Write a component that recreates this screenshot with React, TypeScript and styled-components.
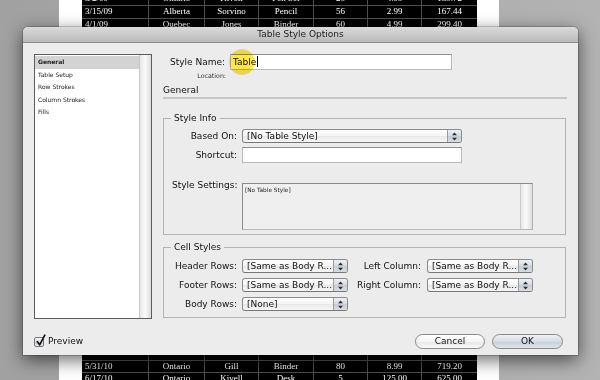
import React from 'react'
import styled, { createGlobalStyle } from 'styled-components'

const UI_FONT = `'DejaVu Sans', Verdana, sans-serif`

const GlobalStyle = createGlobalStyle`
    html, body {
        margin: 0;
        padding: 0;
    }
    body {
        width: 600px;
        height: 380px;
        overflow: hidden;
        background: #a9a9a9;
    }
`

/* ---------- document behind the dialog ---------- */

const Screen = styled.div`
    position: relative;
    width: 600px;
    height: 380px;
    overflow: hidden;
    background: linear-gradient(to right, #a1a1a1, #b3b3b3);
`

const Paper = styled.div`
    margin-left: 59px;
    width: 440px;
    height: 380px;
    box-sizing: border-box;
    padding: 0 22px 0 23px;
    background: #fff;
    overflow: hidden;
`

const Sheet = styled.div`
    margin-top: -7.68px;
    background: #000;
    color: #fff;
    font-family: 'Liberation Serif', 'Times New Roman', serif;
    font-size: 9px;
`

const SheetRow = styled.div`
    display: grid;
    grid-template-columns: 67px 56px 54px 55px 54px 54px 55px;
    height: 12.68px;
    box-sizing: border-box;
    border-top: 1px solid #4f4f4f;
`

const SheetCell = styled.div<{ $first?: boolean }>`
    border-right: 1px solid #4f4f4f;
    padding-left: ${p => (p.$first ? '3px' : '0')};
    text-align: ${p => (p.$first ? 'left' : 'center')};
    line-height: 11.68px;
    white-space: nowrap;
    overflow: hidden;
    &:last-child {
        border-right: none;
    }
`

const topRows: string[][] = [
    ['3/2/09', 'Ontario', 'Kivell', 'Pen Set', '28', '4.99', '139.72'],
    ['3/15/09', 'Alberta', 'Sorvino', 'Pencil', '56', '2.99', '167.44'],
    ['4/1/09', 'Quebec', 'Jones', 'Binder', '60', '4.99', '299.40'],
]

const bottomRows: string[][] = [
    ['5/31/10', 'Ontario', 'Gill', 'Binder', '80', '8.99', '719.20'],
    ['6/17/10', 'Ontario', 'Kivell', 'Desk', '5', '125.00', '625.00'],
]

// rows that sit entirely under the dialog
const COVERED_ROWS = 26
const EMPTY_ROW = ['', '', '', '', '', '', '']

const sheetRows = [
    ...topRows,
    ...Array.from({ length: COVERED_ROWS }, () => EMPTY_ROW),
    ...bottomRows,
]

/* ---------- dialog ---------- */

const Dialog = styled.div`
    position: absolute;
    left: 23px;
    top: 27px;
    width: 555px;
    height: 328px;
    display: flex;
    flex-direction: column;
    background: #ececec;
    border-radius: 5px 5px 0 0;
    box-shadow: 0 5px 18px rgba(0, 0, 0, 0.6), 0 0 0 1px rgba(0, 0, 0, 0.18);
    font-family: ${UI_FONT};
    color: #111;
`

const TitleBar = styled.div`
    flex: none;
    height: 16px;
    box-sizing: border-box;
    border-bottom: 1px solid #8e8e8e;
    border-radius: 5px 5px 0 0;
    background: linear-gradient(#dadada, #bababa);
    font-size: 9px;
    line-height: 15px;
    text-align: center;
    color: #1c1c1c;
`

const Body = styled.div`
    flex: 1;
    display: flex;
    flex-direction: column;
    padding: 11px 11px 6px;
`

const Main = styled.div`
    display: flex;
    gap: 11px;
    height: 265px;
`

const Sidebar = styled.div`
    display: flex;
    width: 118px;
    box-sizing: border-box;
    border: 1px solid #5c5c5c;
    background: #fff;
`

const NavList = styled.ul`
    flex: 1;
    margin: 0;
    padding: 1px 0 0;
    list-style: none;
`

const NavItem = styled.li<{ $active?: boolean }>`
    height: 12.5px;
    padding-left: 3px;
    font-size: 6px;
    line-height: 12.5px;
    font-weight: ${p => (p.$active ? 700 : 400)};
    background: ${p => (p.$active ? '#d3d3d3' : 'transparent')};
    color: #1a1a1a;
`

const ScrollTrack = styled.div`
    flex: none;
    width: 12px;
    box-sizing: border-box;
    border-left: 1px solid #cacaca;
    background: linear-gradient(to right, #e6e6e6, #fbfbfb 45%, #dcdcdc);
`

const Content = styled.div`
    display: flex;
    flex-direction: column;
    width: 404px;
`

const NameRow = styled.div`
    display: flex;
    align-items: center;
    height: 16px;
`

const FieldLabel = styled.label<{ $width?: number; $pad?: number }>`
    width: ${p => (p.$width ? `${p.$width}px` : 'auto')};
    box-sizing: border-box;
    padding-right: ${p => p.$pad ?? 5}px;
    text-align: right;
    font-size: 9px;
    line-height: 11px;
    white-space: nowrap;
`

const TextField = styled.div<{ $width: number; $height: number }>`
    width: ${p => p.$width}px;
    height: ${p => p.$height}px;
    box-sizing: border-box;
    padding-left: 2px;
    border: 1px solid #b9b9b9;
    border-top-color: #8f8f8f;
    background: #fff;
    font-size: 9px;
    line-height: 14px;
    white-space: nowrap;
`

const Caret = styled.span`
    display: inline-block;
    width: 1px;
    height: 11px;
    margin-left: 0.5px;
    vertical-align: -2px;
    background: #000;
`

const LocationNote = styled.div`
    width: 63px;
    margin-top: 2px;
    text-align: right;
    font-size: 6.3px;
    line-height: 8px;
    color: #333;
`

const SectionHeading = styled.h2`
    margin: 5px 0 0;
    padding-bottom: 1px;
    border-bottom: 2px solid #c6c6c6;
    font-size: 9px;
    font-weight: 400;
    line-height: 11px;
`

const Group = styled.fieldset<{ $top: number; $padTop: number; $padBottom: number }>`
    width: 403px;
    box-sizing: border-box;
    min-inline-size: 0;
    margin: ${p => p.$top}px 0 0;
    padding: ${p => p.$padTop}px 0 ${p => p.$padBottom}px;
    border: 1px solid #b3b3b3;
`

const GroupTitle = styled.legend`
    margin-left: 7px;
    padding: 0 3px;
    font-size: 9px;
    line-height: 11px;
`

const InfoGrid = styled.div`
    display: grid;
    grid-template-columns: 78px auto;
    row-gap: 4px;
    align-items: center;
`

const SettingsRow = styled.div`
    display: flex;
    align-items: flex-start;
    margin-top: 20px;
`

const SettingsLabel = styled.label`
    width: 78px;
    box-sizing: border-box;
    padding-left: 8px;
    margin-top: -3px;
    font-size: 9px;
    line-height: 11px;
    white-space: nowrap;
`

const SettingsBox = styled.div`
    display: flex;
    width: 291px;
    height: 47px;
    box-sizing: border-box;
    border: 1px solid #8a8a8a;
    border-right-color: #b0b0b0;
    border-bottom-color: #b8b8b8;
    background: #efefef;
`

const SettingsText = styled.div`
    flex: 1;
    padding: 3px 0 0 2px;
    font-size: 5.8px;
    line-height: 7px;
    color: #222;
`

const CellGrid = styled.div`
    display: grid;
    grid-template-columns: 78px 106px 79px 106px;
    grid-auto-rows: 14px;
    row-gap: 5px;
    align-items: center;
`

const PopupBox = styled.div<{ $width: number }>`
    display: flex;
    width: ${p => p.$width}px;
    height: 14px;
    box-sizing: border-box;
    border: 1px solid #8b8b8b;
    border-bottom-color: #777;
    border-radius: 3px;
    overflow: hidden;
    background: linear-gradient(#ffffff, #f4f4f4 50%, #e8e8e8 51%, #f7f7f7);
`

const PopupValue = styled.span`
    flex: 1;
    padding-left: 4px;
    font-size: 9px;
    line-height: 12px;
    white-space: nowrap;
    overflow: hidden;
`

const PopupArrows = styled.span`
    display: flex;
    align-items: center;
    justify-content: center;
    flex: none;
    width: 13px;
    border-left: 1px solid #9c9c9c;
    background: linear-gradient(#eef1f5, #d5dae1 50%, #c6ccd5 51%, #d9dee5);
`

const Footer = styled.div`
    display: flex;
    align-items: center;
    height: 15px;
    margin-top: 15px;
`

const PreviewToggle = styled.label`
    display: flex;
    align-items: center;
    gap: 4px;
    font-size: 9px;
    line-height: 11px;
`

const CheckBox = styled.span`
    position: relative;
    width: 10px;
    height: 10px;
    box-sizing: border-box;
    border: 1px solid #767676;
    border-radius: 2px;
    background: linear-gradient(#f6f8fb, #d7dce4 50%, #c9d0da 51%, #e3e7ed);
    & svg {
        position: absolute;
        left: 0;
        top: -4px;
    }
`

const ButtonRow = styled.div`
    display: flex;
    gap: 7px;
    margin-left: auto;
    margin-right: 4px;
`

const PushButton = styled.button<{ $width: number; $primary?: boolean }>`
    width: ${p => p.$width}px;
    height: 15px;
    padding: 0;
    border: 1px solid #8a8a8a;
    border-radius: 8px;
    background: ${p =>
        p.$primary
            ? 'linear-gradient(#eef2f7, #d6dce4 50%, #c8cfd9 51%, #e0e5eb)'
            : 'linear-gradient(#ffffff, #f4f4f4 50%, #e7e7e7 51%, #f8f8f8)'};
    font-family: ${UI_FONT};
    font-size: 9px;
    line-height: 13px;
    color: #111;
`

// yellow click highlight from the screen recording
const ClickSpot = styled.div`
    position: absolute;
    left: 229px;
    top: 49px;
    width: 26px;
    height: 26px;
    border-radius: 50%;
    background: radial-gradient(circle, rgba(255, 228, 40, 0.9) 0, rgba(250, 222, 50, 0.8) 62%, rgba(250, 225, 60, 0) 100%);
    mix-blend-mode: multiply;
    pointer-events: none;
`

const Popup = ({ value, width }: { value: string; width: number }) => (
    <PopupBox $width={width}>
        <PopupValue>{value}</PopupValue>
        <PopupArrows>
            <svg width="5" height="9" viewBox="0 0 5 9">
                <polygon points="0,3.2 2.5,0.4 5,3.2" fill="#2e2e2e" />
                <polygon points="0,5.8 2.5,8.6 5,5.8" fill="#2e2e2e" />
            </svg>
        </PopupArrows>
    </PopupBox>
)

const navItems = ['General', 'Table Setup', 'Row Strokes', 'Column Strokes', 'Fills']

const cellRows = [
    ['Header Rows:', '[Same as Body R...', 'Left Column:', '[Same as Body R...'],
    ['Footer Rows:', '[Same as Body R...', 'Right Column:', '[Same as Body R...'],
    ['Body Rows:', '[None]'],
]

export default function App() {
    return (
        <Screen>
            <GlobalStyle />
            <Paper>
                <Sheet>
                    {sheetRows.map((row, i) => (
                        <SheetRow key={i}>
                            {row.map((cell, j) => (
                                <SheetCell key={j} $first={j === 0}>
                                    {cell}
                                </SheetCell>
                            ))}
                        </SheetRow>
                    ))}
                </Sheet>
            </Paper>

            <Dialog>
                <TitleBar>Table Style Options</TitleBar>
                <Body>
                    <Main>
                        <Sidebar>
                            <NavList>
                                {navItems.map((item, i) => (
                                    <NavItem key={item} $active={i === 0}>
                                        {item}
                                    </NavItem>
                                ))}
                            </NavList>
                            <ScrollTrack />
                        </Sidebar>

                        <Content>
                            <NameRow>
                                <FieldLabel $width={67}>Style Name:</FieldLabel>
                                <TextField $width={222} $height={16}>
                                    Table
                                    <Caret />
                                </TextField>
                            </NameRow>
                            <LocationNote>Location:</LocationNote>
                            <SectionHeading>General</SectionHeading>

                            <Group $top={14} $padTop={5} $padBottom={4}>
                                <GroupTitle>Style Info</GroupTitle>
                                <InfoGrid>
                                    <FieldLabel>Based On:</FieldLabel>
                                    <Popup value="[No Table Style]" width={220} />
                                    <FieldLabel>Shortcut:</FieldLabel>
                                    <TextField $width={220} $height={16} />
                                </InfoGrid>
                                <SettingsRow>
                                    <SettingsLabel>Style Settings:</SettingsLabel>
                                    <SettingsBox>
                                        <SettingsText>[No Table Style]</SettingsText>
                                        <ScrollTrack />
                                    </SettingsBox>
                                </SettingsRow>
                            </Group>

                            <Group $top={7} $padTop={6} $padBottom={6}>
                                <GroupTitle>Cell Styles</GroupTitle>
                                <CellGrid>
                                    {cellRows.map(row => (
                                        <React.Fragment key={row[0]}>
                                            <FieldLabel>{row[0]}</FieldLabel>
                                            <Popup value={row[1]} width={106} />
                                            {row[2] && <FieldLabel $pad={6}>{row[2]}</FieldLabel>}
                                            {row[3] && <Popup value={row[3]} width={106} />}
                                        </React.Fragment>
                                    ))}
                                </CellGrid>
                            </Group>
                        </Content>
                    </Main>

                    <Footer>
                        <PreviewToggle>
                            <CheckBox>
                                <svg width="12" height="13" viewBox="0 0 12 13">
                                    <path d="M2.2 7.6 L4.6 10.8 L9.8 1.2" stroke="#151515" strokeWidth="1.7" fill="none" strokeLinecap="round" strokeLinejoin="round" />
                                </svg>
                            </CheckBox>
                            Preview
                        </PreviewToggle>
                        <ButtonRow>
                            <PushButton $width={70}>Cancel</PushButton>
                            <PushButton $width={71} $primary>
                                OK
                            </PushButton>
                        </ButtonRow>
                    </Footer>
                </Body>
            </Dialog>

            <ClickSpot />
        </Screen>
    )
}
